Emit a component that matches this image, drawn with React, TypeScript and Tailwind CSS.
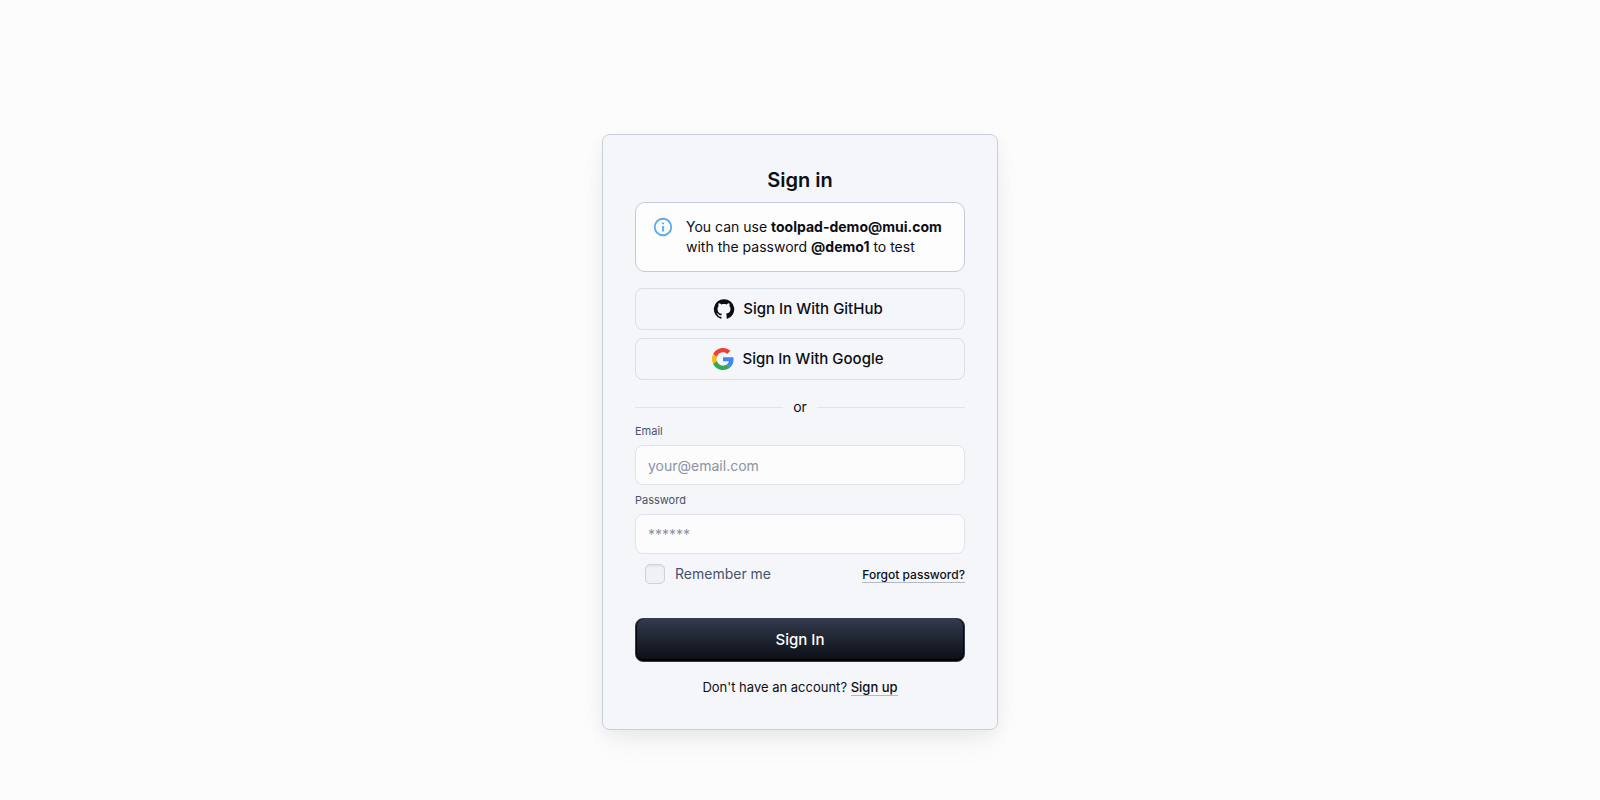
import type { ReactNode } from 'react';

function InfoIcon() {
  return (
    <svg viewBox="0 0 24 24" className="size-[22px] shrink-0 fill-[#55a8f2]" aria-hidden="true">
      <path d="M11,9H13V7H11M12,20C7.59,20 4,16.41 4,12C4,7.59 7.59,4 12,4C16.41,4 20,7.59 20,12C20,16.41 16.41,20 12,20M12,2A10,10 0 0,0 2,12A10,10 0 0,0 12,22A10,10 0 0,0 22,12A10,10 0 0,0 12,2M11,17H13V11H11V17Z" />
    </svg>
  );
}

function GitHubIcon() {
  return (
    <svg viewBox="0 0 24 24" className="size-[22px]" fill="currentColor" aria-hidden="true">
      <path d="M12 1.27a11 11 0 00-3.48 21.46c.55.09.73-.28.73-.55v-1.84c-3.03.64-3.67-1.46-3.67-1.46-.55-1.29-1.28-1.65-1.28-1.65-.92-.65.1-.65.1-.65 1.1 0 1.73 1.1 1.73 1.1.92 1.65 2.57 1.2 3.21.92a2 2 0 01.64-1.47c-2.47-.27-5.04-1.19-5.04-5.5 0-1.1.46-2.1 1.2-2.84a3.76 3.76 0 010-2.93s.91-.28 3.11 1.1c1.8-.49 3.7-.49 5.5 0 2.1-1.38 3.02-1.1 3.02-1.1a3.76 3.76 0 01.1 2.93c.83.74 1.2 1.74 1.2 2.94 0 4.21-2.57 5.13-5.04 5.4.45.37.82.92.82 2.02v3.03c0 .27.1.64.73.55A11 11 0 0012 1.27" />
    </svg>
  );
}

function GoogleIcon() {
  return (
    <svg viewBox="0 0 48 48" className="size-[22px]" aria-hidden="true">
      <path fill="#EA4335" d="M24 9.5c3.54 0 6.71 1.22 9.21 3.6l6.85-6.85C35.9 2.38 30.47 0 24 0 14.62 0 6.51 5.38 2.56 13.22l7.98 6.19C12.43 13.72 17.74 9.5 24 9.5z" />
      <path fill="#4285F4" d="M46.98 24.55c0-1.57-.15-3.09-.38-4.55H24v9.02h12.94c-.58 2.96-2.26 5.48-4.78 7.18l7.73 6c4.51-4.18 7.09-10.36 7.09-17.65z" />
      <path fill="#FBBC05" d="M10.53 28.59c-.48-1.45-.76-2.99-.76-4.59s.27-3.14.76-4.59l-7.98-6.19C.92 16.46 0 20.12 0 24c0 3.88.92 7.54 2.56 10.78l7.97-6.19z" />
      <path fill="#34A853" d="M24 48c6.48 0 11.93-2.13 15.89-5.81l-7.73-6c-2.15 1.45-4.92 2.3-8.16 2.3-6.26 0-11.57-4.22-13.47-9.91l-7.98 6.19C6.51 42.62 14.62 48 24 48z" />
    </svg>
  );
}

function ProviderButton({ icon, children }: { icon: ReactNode; children: ReactNode }) {
  return (
    <button
      type="button"
      className="flex h-[42px] w-full items-center justify-center rounded-lg border border-[#dadee7] text-[15px] leading-6 font-medium text-[#0b0e14]"
    >
      <span className="mr-2 -ml-1">{icon}</span>
      {children}
    </button>
  );
}

function Field({ id, label, type, placeholder }: { id: string; label: string; type: string; placeholder: string }) {
  return (
    <div className="flex flex-col gap-1.5">
      <label htmlFor={id} className="text-[11px] leading-4 text-[#47536b]">
        {label}
      </label>
      <input
        id={id}
        type={type}
        placeholder={placeholder}
        className="h-10 w-full rounded-lg border border-[#dfe3ea] bg-[#fcfcfc] px-3 text-sm text-[#0b0e14] placeholder:text-[#8b93a3] placeholder:opacity-100"
      />
    </div>
  );
}

export default function App() {
  return (
    <div className="flex min-h-screen items-center justify-center bg-[#fcfcfc] pt-16 font-['Inter',sans-serif] text-[#0b0e14]">
      <main className="w-full max-w-[396px] rounded-lg border border-[#c9cfdd] bg-[#f5f6fa] px-8 py-8 shadow-[0_5px_15px_rgba(0,0,0,0.05),0_15px_35px_-5px_rgba(25,28,33,0.05)]">
        <h1 className="text-center text-xl leading-[26px] font-semibold">Sign in</h1>

        <div className="mt-[9px] flex gap-3 rounded-[10px] border border-[#c4cad8] bg-[#fdfdfe] px-4 pt-[13px] pb-[14px]">
          <InfoIcon />
          <p className="pt-px text-sm leading-5">
            You can use <strong className="font-bold">toolpad-demo@mui.com</strong> with the password{' '}
            <strong className="font-bold">@demo1</strong> to test
          </p>
        </div>

        <div className="mt-4 flex flex-col gap-2">
          <ProviderButton icon={<GitHubIcon />}>Sign In With GitHub</ProviderButton>
          <ProviderButton icon={<GoogleIcon />}>Sign In With Google</ProviderButton>
        </div>

        <div className="mt-[17px] flex items-center gap-2.5 text-sm leading-5">
          <span className="h-px flex-1 bg-[#dfe3ea]" />
          or
          <span className="h-px flex-1 bg-[#dfe3ea]" />
        </div>

        <form className="mt-1.5">
          <div className="flex flex-col gap-[7px]">
            <Field id="email" label="Email" type="email" placeholder="your@email.com" />
            <Field id="password" label="Password" type="password" placeholder="******" />
          </div>
          <div className="mt-2.5 flex items-center justify-between">
            <label className="ml-2.5 flex items-center gap-2.5 text-sm leading-5 text-[#47536b]">
              <input
                type="checkbox"
                className="size-5 appearance-none rounded-[5px] border border-[#ced1d9] bg-[#f0f1f4] shadow-[inset_0_2px_1px_rgba(0,0,0,0.05)] checked:bg-[#0b0e14]"
              />
              Remember me
            </label>
            <a href="#forgot" className="border-b border-[#b6b9c0] pt-0.5 text-xs leading-[15px] font-medium">
              Forgot password?
            </a>
          </div>
          <button
            type="submit"
            className="mt-[34px] flex h-11 w-full items-center justify-center rounded-lg border border-[#333b4d] bg-linear-to-b from-[#333b4d] to-[#0b0e14] text-[15px] leading-6 font-medium text-white shadow-[inset_1px_0_0_#05070a,inset_-1px_0_0_#05070a,inset_0_-2px_0_#000]"
          >
            Sign In
          </button>
        </form>

        <p className="mt-[15px] text-center text-[13px] leading-5">
          Don't have an account?{' '}
          <a href="#signup" className="border-b border-[#b6b9c0] font-medium">
            Sign up
          </a>
        </p>
      </main>
    </div>
  );
}
